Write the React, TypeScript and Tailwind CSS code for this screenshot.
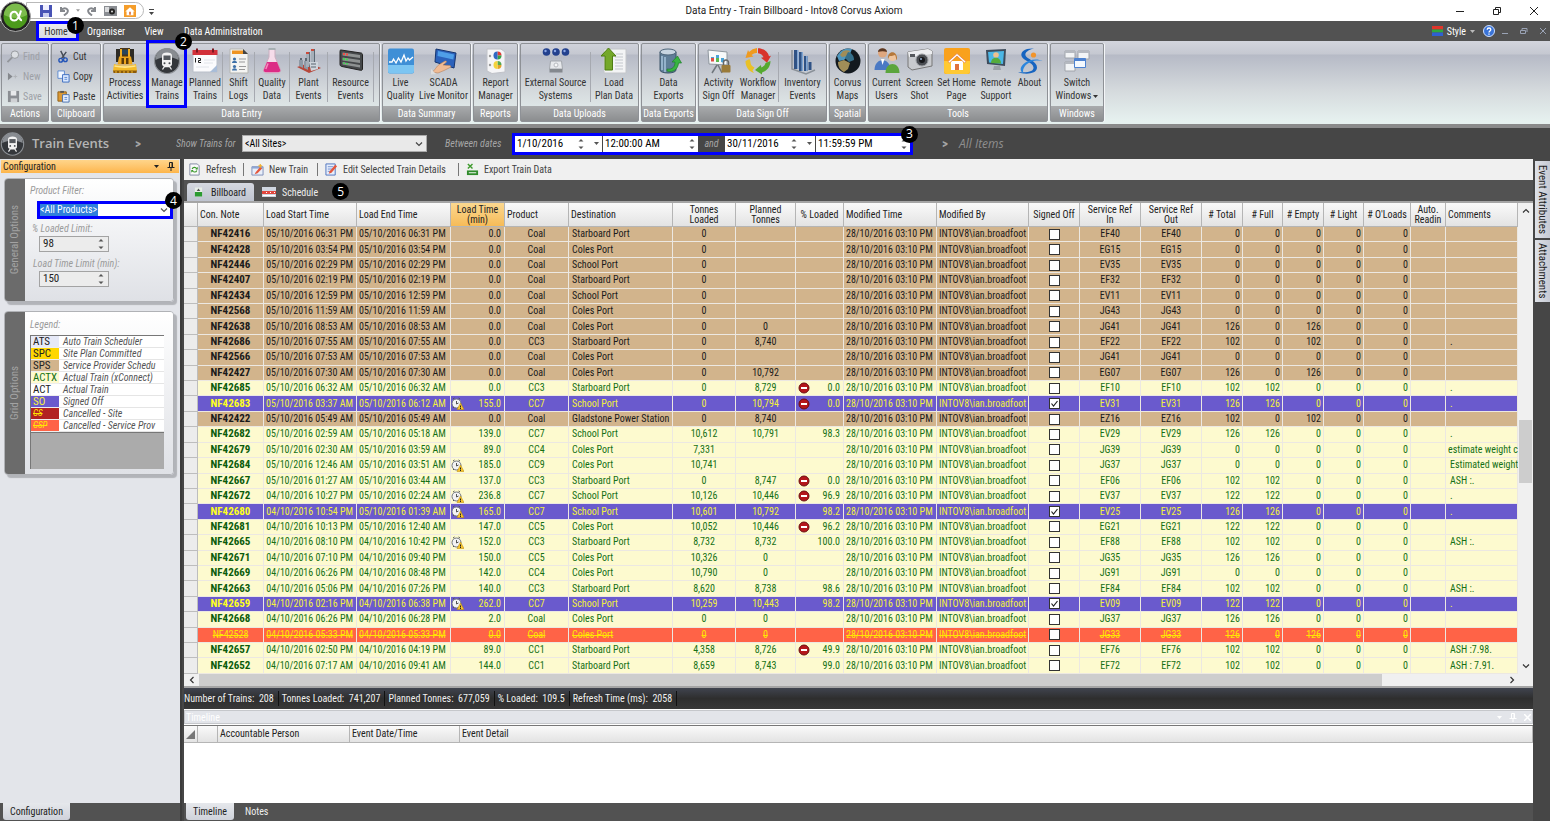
import React from 'react';

type Kind = 'sps' | 'actx' | 'so' | 'csp';

interface Train {
  kind: Kind;
  note: string;
  start: string;
  end: string;
  late?: boolean;
  mins: string;
  product: string;
  dest: string;
  loaded: string;
  planned: string;
  under?: boolean;
  pct: string;
  ref: string;
  total: number;
  full: number;
  empty: number;
  comment: string;
}

const row = (
  kind: Kind, note: string, start: string, end: string, mins: string, product: string, dest: string,
  loaded: string, planned: string, pct: string, ref: string, total: number, full: number, empty: number,
  comment = '', flags = '',
): Train => ({
  kind, note, start, end, mins, product, dest, loaded, planned, pct, ref, total, full, empty, comment,
  late: flags.includes('L'),
  under: flags.includes('U'),
});

const D5 = '05/10/2016 ';
const D4 = '04/10/2016 ';
const SB = 'Starboard Port';
const CO = 'Coles Port';
const SC = 'School Port';

const trains: Train[] = [
  row('sps', 'NF42416', D5 + '06:31 PM', D5 + '06:31 PM', '0.0', 'Coal', SB, '0', '', '', 'EF40', 0, 0, 0),
  row('sps', 'NF42428', D5 + '03:54 PM', D5 + '03:54 PM', '0.0', 'Coal', CO, '0', '', '', 'EG15', 0, 0, 0),
  row('sps', 'NF42446', D5 + '02:29 PM', D5 + '02:29 PM', '0.0', 'Coal', SC, '0', '', '', 'EV35', 0, 0, 0),
  row('sps', 'NF42407', D5 + '02:19 PM', D5 + '02:19 PM', '0.0', 'Coal', SB, '0', '', '', 'EF32', 0, 0, 0),
  row('sps', 'NF42434', D5 + '12:59 PM', D5 + '12:59 PM', '0.0', 'Coal', SC, '0', '', '', 'EV11', 0, 0, 0),
  row('sps', 'NF42568', D5 + '11:59 AM', D5 + '11:59 AM', '0.0', 'Coal', CO, '0', '', '', 'JG43', 0, 0, 0),
  row('sps', 'NF42638', D5 + '08:53 AM', D5 + '08:53 AM', '0.0', 'Coal', CO, '0', '0', '', 'JG41', 126, 0, 126),
  row('sps', 'NF42686', D5 + '07:55 AM', D5 + '07:55 AM', '0.0', 'CC3', SB, '0', '8,740', '', 'EF22', 102, 0, 102, '.'),
  row('sps', 'NF42566', D5 + '07:53 AM', D5 + '07:53 AM', '0.0', 'Coal', CO, '0', '', '', 'JG41', 0, 0, 0),
  row('sps', 'NF42427', D5 + '07:30 AM', D5 + '07:30 AM', '0.0', 'Coal', CO, '0', '10,792', '', 'EG07', 126, 0, 126),
  row('actx', 'NF42685', D5 + '06:32 AM', D5 + '06:32 AM', '0.0', 'CC3', SB, '0', '8,729', '0.0', 'EF10', 102, 102, 0, '.', 'U'),
  row('so', 'NF42683', D5 + '03:37 AM', D5 + '06:12 AM', '155.0', 'CC7', SC, '0', '10,794', '0.0', 'EV31', 126, 126, 0, '.', 'LU'),
  row('sps', 'NF42422', D5 + '05:49 AM', D5 + '05:49 AM', '0.0', 'Coal', 'Gladstone Power Station', '0', '8,740', '', 'EZ16', 102, 0, 102),
  row('actx', 'NF42682', D5 + '02:59 AM', D5 + '05:18 AM', '139.0', 'CC7', SC, '10,612', '10,791', '98.3', 'EV29', 126, 126, 0, '.'),
  row('actx', 'NF42679', D5 + '02:30 AM', D5 + '03:59 AM', '89.0', 'CC4', CO, '7,331', '', '', 'JG39', 0, 0, 0, 'estimate weight c'),
  row('actx', 'NF42684', D5 + '12:46 AM', D5 + '03:51 AM', '185.0', 'CC9', CO, '10,741', '', '', 'JG37', 0, 0, 0, 'Estimated weight', 'L'),
  row('actx', 'NF42667', D5 + '01:27 AM', D5 + '03:44 AM', '137.0', 'CC3', SB, '0', '8,747', '0.0', 'EF06', 102, 102, 0, 'ASH :.', 'U'),
  row('actx', 'NF42672', D4 + '10:27 PM', D5 + '02:24 AM', '236.8', 'CC7', SC, '10,126', '10,446', '96.9', 'EV37', 122, 122, 0, '.', 'LU'),
  row('so', 'NF42680', D4 + '10:54 PM', D5 + '01:39 AM', '165.0', 'CC7', SC, '10,601', '10,792', '98.2', 'EV25', 126, 126, 0, '.', 'L'),
  row('actx', 'NF42681', D4 + '10:13 PM', D5 + '12:40 AM', '147.0', 'CC5', CO, '10,052', '10,446', '96.2', 'EG21', 122, 122, 0, '', 'U'),
  row('actx', 'NF42665', D4 + '08:10 PM', D4 + '10:42 PM', '152.0', 'CC3', SB, '8,732', '8,732', '100.0', 'EF88', 102, 102, 0, 'ASH :.', 'L'),
  row('actx', 'NF42671', D4 + '07:10 PM', D4 + '09:40 PM', '150.0', 'CC5', CO, '10,326', '0', '', 'JG35', 126, 126, 0),
  row('actx', 'NF42669', D4 + '06:26 PM', D4 + '08:48 PM', '142.0', 'CC4', CO, '10,790', '0', '', 'JG91', 0, 0, 0),
  row('actx', 'NF42663', D4 + '05:06 PM', D4 + '07:26 PM', '140.0', 'CC3', SB, '8,620', '8,738', '98.6', 'EF84', 102, 102, 0, 'ASH :.'),
  row('so', 'NF42659', D4 + '02:16 PM', D4 + '06:38 PM', '262.0', 'CC7', SC, '10,259', '10,443', '98.2', 'EV09', 122, 122, 0, '.', 'L'),
  row('actx', 'NF42668', D4 + '06:26 PM', D4 + '06:28 PM', '2.0', 'Coal', CO, '0', '0', '', 'JG37', 126, 126, 0),
  row('csp', 'NF42528', D4 + '05:33 PM', D4 + '05:33 PM', '0.0', 'Coal', CO, '0', '0', '', 'JG33', 126, 0, 126),
  row('actx', 'NF42657', D4 + '02:50 PM', D4 + '04:19 PM', '89.0', 'CC1', SB, '4,358', '8,726', '49.9', 'EF76', 102, 102, 0, 'ASH :7.98.', 'U'),
  row('actx', 'NF42652', D4 + '07:17 AM', D4 + '09:41 AM', '144.0', 'CC1', SB, '8,659', '8,743', '99.0', 'EF72', 102, 102, 0, 'ASH : 7.91.'),
];

const rowStyle: Record<Kind, string> = {
  sps: 'bg-[#d2b48c] text-[#1a1a1a]',
  actx: 'bg-[#fdfacf] text-[#157015]',
  so: 'bg-[#6a5acd] text-[#f3f13c]',
  csp: 'bg-[#ff6347] text-[#ffe600] line-through',
};

const columns: [string, string][] = [
  ['', 'w-[14px]'],
  ['Con. Note', 'w-[66px] text-left'],
  ['Load Start Time', 'w-[93px] text-left'],
  ['Load End Time', 'w-[94px] text-left'],
  ['Load Time\n(min)', 'w-[54px] text-center'],
  ['Product', 'w-[64px] text-left'],
  ['Destination', 'w-[104px] text-left'],
  ['Tonnes\nLoaded', 'w-[63px] text-center'],
  ['Planned\nTonnes', 'w-[60px] text-center'],
  ['% Loaded', 'w-[48px] text-center'],
  ['Modified Time', 'w-[93px] text-left'],
  ['Modified By', 'w-[92px] text-left'],
  ['Signed Off', 'w-[51px] text-center'],
  ['Service Ref\nIn', 'w-[61px] text-center'],
  ['Service Ref\nOut', 'w-[61px] text-center'],
  ['# Total', 'w-[41px] text-center'],
  ['# Full', 'w-[40px] text-center'],
  ['# Empty', 'w-[41px] text-center'],
  ['# Light', 'w-[40px] text-center'],
  ["# O'Loads", 'w-[47px] text-center'],
  ['Auto.\nReadin', 'w-[35px] text-center'],
  ['Comments', 'text-left'],
];

const Badge: React.FC<{ n: number; className: string }> = ({ n, className }) => (
  <span className={`absolute z-20 flex h-[17px] w-[17px] items-center justify-center rounded-full bg-black font-['Open_Sans',sans-serif] text-[12px] leading-none text-white not-italic ${className}`}>
    {n}
  </span>
);

const Chevron: React.FC<{ up?: boolean; className?: string }> = ({ up, className = '' }) => (
  <svg viewBox="0 0 8 6" className={`h-[6px] w-[8px] ${className}`} fill="none" stroke="currentColor" strokeWidth="1.2">
    <path d={up ? 'M1 4.5 4 1.5 7 4.5' : 'M1 1.5 4 4.5 7 1.5'} />
  </svg>
);

const Triangle: React.FC<{ className?: string }> = ({ className = '' }) => (
  <svg viewBox="0 0 7 4" className={`shrink-0 ${className}`}><path d="M0 0h7L3.500 4z" fill="currentColor" /></svg>
);

const Spinner = () => (
  <svg viewBox="0 0 6 12" className="h-[12px] w-[6px] shrink-0" fill="#555">
    <path d="M0.500 3.500 3 1 5.500 3.500zM0.500 8.500 3 11 5.500 8.500z" />
  </svg>
);

const Pin = () => (
  <svg viewBox="0 0 8 9" className="h-[9px] w-[8px]" fill="none" stroke="currentColor" strokeWidth="1">
    <path d="M2.500 5V.5h3V5M5 1v4M.5 5.500h7M4 5.500V9" />
  </svg>
);

/* ---------- ribbon icons ---------- */

const Icon: React.FC<{ children: React.ReactNode }> = ({ children }) => (
  <svg viewBox="0 0 28 28" className="h-[28px] w-[28px] shrink-0">{children}</svg>
);

const Locomotive = () => (
  <>
    <circle cx="14" cy="14" r="12.500" fill="#34373b" stroke="#8d9196" strokeWidth="1.200" />
    <path d="M2.500 13a11.500 11.500 0 0 1 23 0c-7-4-16-4-23 0z" fill="#888c91" />
    <path d="M9 8.500c0-2 2-3 5-3s5 1 5 3V17c0 1.500-1 2.500-2.500 2.500h-5C10 19.500 9 18.500 9 17z" fill="#f2f2f2" />
    <path d="M10.500 8.500h7v4.500h-7z" fill="#55595e" />
    <path d="m9.500 22.500 2-3h5l2 3" fill="none" stroke="#f2f2f2" strokeWidth="1.300" />
    <circle cx="11.500" cy="16.200" r="1" fill="#44484c" /><circle cx="16.500" cy="16.200" r="1" fill="#44484c" />
  </>
);

const icons = {
  dozer: (
    <Icon>
      <path d="M5 2h4v13H5zM19 2h4v13h-4z" fill="#2e2b26" />
      <path d="M9 1h10v9H9z" fill="#4a3518" /><path d="M11 2.500h6v5h-6z" fill="#29455c" />
      <path d="M9 2h2v8H9zM17 2h2v8h-2z" fill="#f0ae22" />
      <path d="M8 9.500h12l1.500 8h-15z" fill="#eda51c" /><path d="M10.500 11h2.500v6h-2.500zM15 11h2.500v6H15z" fill="#5b3b0b" />
      <path d="M3 17c7 2 15 2 22 0l1 7H2z" fill="#f4bb2a" /><path d="M2 23.500h24l-.5 2.500h-23z" fill="#8c5a09" />
      <path d="M3.500 19c7 1.500 14 1.500 21 0" stroke="#ffe58b" strokeWidth="1.500" fill="none" /><path d="M5 24v2M9 24v2M13 24v2M17 24v2M21 24v2" stroke="#f4bb2a" />
    </Icon>
  ),
  train: <Icon><Locomotive /></Icon>,
  calendar: (
    <Icon>
      <path d="M2 5h24v20H2z" fill="#fbfbfd" stroke="#b9bfc9" />
      <path d="M1.500 3h25v5h-25z" fill="#d2303a" />
      <path d="M6 1.500v4M22 1.500v4" stroke="#7c1720" strokeWidth="2" />
      <path d="M4.500 11v4.500M7 11.500h2.500v2H7.500v2H10" stroke="#222" fill="none" />
      <path d="m19 25 7-7v7z" fill="#a9bdd8" /><path d="M13 13h11M13 16h9M5 20h13" stroke="#e1e4ea" />
    </Icon>
  ),
  shift: (
    <Icon>
      <path d="M5 2h13l5 5v19H5z" fill="#f4f4f2" stroke="#b5b5b0" /><path d="M7 3.500h12v3.500H7z" fill="#ee9422" />
      <path d="m18 2 5 5h-5z" fill="#444" />
      <circle cx="9.500" cy="12" r="1.600" fill="#3d70a8" /><path d="M7 16c0-3 5-3 5 0z" fill="#3d70a8" />
      <circle cx="9.500" cy="19.500" r="1.600" fill="#3d70a8" /><path d="M7 23.500c0-3 5-3 5 0z" fill="#3d70a8" />
      <path d="M14 12h7M14 15h6M14 19.500h7M14 22.500h6" stroke="#999" />
    </Icon>
  ),
  flask: (
    <Icon>
      <path d="M11 2h6v8l5.500 12.500c.8 2-.5 3.500-2.500 3.500H8c-2 0-3.300-1.500-2.500-3.500L11 10z" fill="#f5dcea" stroke="#c9aebf" />
      <path d="M9 15h10l3.200 7.800c.5 1.500-.4 2.400-2.200 2.400H8c-1.800 0-2.700-.9-2.200-2.400z" fill="#dc2c85" />
      <path d="M10 16.500 7.800 22" stroke="#f58bbd" strokeWidth="1.500" /><path d="M10.500 2h7" stroke="#9aa" strokeWidth="1.500" />
    </Icon>
  ),
  plant: (
    <Icon>
      <path d="m2 20 12 6 12-5-12-5z" fill="#b6483b" /><path d="M4 13h4v8l-4-2zM9 14h4v9l-4-2z" fill="#8e99a5" />
      <path d="M11 5h4v15h-4zM16 2h4v17h-4z" fill="#a5afb9" /><path d="M11 5h4v2h-4zM16 2h4v2h-4z" fill="#cc4b3b" />
      <path d="M14.500 5v15M19.500 2v17" stroke="#5d6873" /><path d="M14 15h9v7l-7 2z" fill="#cfd6dd" /><path d="M16 17h5M16 20h5" stroke="#5b6772" />
      <path d="M5 13v-2h2v2M10 14v-3h2v3" fill="#5d6873" />
    </Icon>
  ),
  resource: (
    <Icon>
      <path d="m4 3 20 3c1 0 1.500 1 1.500 2v14c0 1-.8 1.500-1.800 1.300L5 19.500c-1 0-2-1-2-2V4.500C3 3.500 3 3 4 3z" fill="#45484a" stroke="#222" />
      <path d="m5.500 5.500 17.500 2.500v3L5.500 8.500zM5.500 10.500 23 13v3L5.500 13.500zM5.500 15 23 18v2.500L5.500 17.500z" fill="#8e9292" />
      <path d="M7 6v2M10 6.500v2" stroke="#ef5045" strokeWidth="2" /><path d="M7 11v2M10 11.500v2M7 15.500v1.500M10 16v1.500" stroke="#49cf58" strokeWidth="2" />
    </Icon>
  ),
  live: (
    <Icon>
      <rect x="1" y="1.500" width="26" height="25" rx="2" fill="#3f8fd6" /><path d="M1 18h26v6q0 2.500-3 2.500H4q-3 0-3-2.500z" fill="#7cc5f2" />
      <path d="M2 15h3l1.500-3L9 16l2.500-5L14 15l3-7 2 6 2-3 1.500 2L26 10" fill="none" stroke="#fff" strokeWidth="1.300" />
    </Icon>
  ),
  scada: (
    <Icon>
      <path d="m6 2 20 4-2 15L5 15z" fill="#2c62bb" stroke="#15356f" /><path d="m8 4 16 3.500-.7 5L7.500 9z" fill="#4f9fe8" />
      <path d="M2 25c3-1 4-6 8-8l5-3c1.500-.5 2 .8 1 1.600l-3 2.400 7 .5c1 .5 1 1.500 0 2l-6 3-6 2.500z" fill="#f0bb94" stroke="#b9835d" strokeWidth=".6" />
      <path d="m1 22 5 5-5 .5z" fill="#ddd" />
    </Icon>
  ),
  report: (
    <Icon>
      <path d="M5 2h14l4 3v20l-13 1.500L5 24z" fill="#f5f5f7" stroke="#c0c2c8" />
      <circle cx="15.500" cy="8.500" r="4" fill="#e5e9ef" /><path d="M15.500 8.500V4.500a4 4 0 0 1 4 4z" fill="#e33b35" /><path d="M15.500 8.500h4a4 4 0 0 1-4 4z" fill="#37a046" /><path d="M15.500 12.500a4 4 0 0 1 0-8z" fill="#2f67c3" />
      <path d="M15.500 18v-4a4 4 0 0 1 4 4z" fill="#55a852" /><path d="M15.500 18h4a4 4 0 0 1-4 4z" fill="#e2a22b" /><path d="M15.500 22a4 4 0 0 1 0-8z" fill="#f4d33d" />
      <circle cx="8" cy="9" r="1.200" fill="#999" /><circle cx="8" cy="18" r="1.200" fill="#999" />
    </Icon>
  ),
  external: (
    <Icon>
      <circle cx="4.500" cy="5" r="3.800" fill="#23418e" /><circle cx="14" cy="5" r="3.800" fill="#23418e" /><circle cx="23.500" cy="5" r="3.800" fill="#23418e" />
      <circle cx="3.500" cy="4" r="1.200" fill="#8ba7e6" /><circle cx="13" cy="4" r="1.200" fill="#8ba7e6" /><circle cx="22.500" cy="4" r="1.200" fill="#8ba7e6" />
      <path d="M5 9v2h18V9M14 9v5" stroke="#b3b8c0" fill="none" strokeDasharray="1 1" />
      <path d="M8.500 14h11l1 8h-13z" fill="#e7e9ec" stroke="#a3a7ad" /><circle cx="14" cy="18" r="2" fill="#f7f8f9" stroke="#b7babf" /><path d="M7.500 22h13v3.500h-13z" fill="#84888e" />
    </Icon>
  ),
  load: (
    <Icon>
      <path d="M4 2h22v24H4z" fill="#f3f4f5" stroke="#c4c7ca" /><path d="M16 7h7M15 10h8M15 13h8M15 16h8M15 19h8M15 22h8" stroke="#c3c7cc" />
      <path d="m8.500 1 7.500 8h-3.500v14H5V9H1z" fill="#74a829" stroke="#4e7d13" />
    </Icon>
  ),
  exports: (
    <Icon>
      <path d="M5 5v18c0 4 16 4 16 0V5z" fill="#5f7e98" stroke="#3c5468" /><ellipse cx="13" cy="5" rx="8" ry="3" fill="#c7d5e1" stroke="#4d657a" />
      <path d="M7 9v14M10 10v15" stroke="#a7c4dc" strokeWidth="1.500" />
      <path d="M12 22c6 1 8-3 8-7h-3l5.500-6 4 7h-3c-.5 6-5 10-11.500 8z" fill="#37b441" stroke="#1c7f28" strokeWidth=".7" />
    </Icon>
  ),
  activity: (
    <Icon>
      <path d="m3 3 19 2v13L4 17z" fill="#f7f9fa" stroke="#8f979e" /><path d="M6 14v-4h3v4M11 15V8h3v7M16 15v-4h3v5" fill="#4aa3d8" />
      <path d="M6 11h3v3.500H6z" fill="#e04c43" /><path d="M11 11h3v4h-3z" fill="#5cb84e" /><path d="m12 18-5 8M13 18l4 8" stroke="#6f767c" strokeWidth="1.500" />
      <rect x="16.500" y="18" width="9" height="7.500" rx="1" fill="#9a7b3a" /><path d="M18.500 18v-2.500a2.500 2.500 0 0 1 5 0V18" fill="none" stroke="#666" strokeWidth="1.500" />
    </Icon>
  ),
  workflow: (
    <Icon>
      <path d="M13 1a13 13 0 0 0-8 4L4 3 1.500 11l8-1.500-2-1.500A8 8 0 0 1 13 6z" fill="#ef9a1f" />
      <path d="M14 1.200c6 0 10 4 11 8l2-.5-4 7-6-5 2.500-.5C18.500 8 17 6.500 14 6.300z" fill="#d8332c" />
      <path d="M26.500 14c0 6-4 10-8.500 11.500v2l-7-4.500 6-5 .3 2.500c2.500-1 3.700-2.500 4.200-4.500z" fill="#55a930" />
      <path d="M10 26C5 24.500 1.500 20 1.500 14l4-2 .8 2c0 3.500 1.700 5.500 4.200 6.500l-2 3z" fill="#e9c126" />
    </Icon>
  ),
  inventory: (
    <Icon>
      <path d="M3 3v19l14 5 9-4" fill="none" stroke="#8a9198" strokeWidth="1.500" />
      <path d="M5 3h4v19H5zM10 5h4v19h-4zM15 9h3.500v15H15zM19.500 15h3v8h-3z" fill="#2f5285" />
      <path d="M8 3h1.500v19H8zM12.500 5H14v19h-1.500zM17 9h1.500v15H17z" fill="#7fa5d3" />
    </Icon>
  ),
  globe: (
    <Icon>
      <circle cx="14" cy="14" r="12.500" fill="#13191f" /><path d="M3 9a12.500 12.500 0 0 1 15-7l-2 5-6 6-5 1z" fill="#4f96bd" />
      <path d="M9 4c3-1 5-1 7 0l-3 5-5 1-2-2zM4 15l6-2 6 3-2 6-4 3c-4-2-6-5-6-10z" fill="#a08d58" /><path d="M14 5c4 1 6 4 6 8l-5 2-4-4z" fill="#356f8a" />
    </Icon>
  ),
  users: (
    <Icon>
      <circle cx="9.500" cy="6" r="4.500" fill="#dfa77f" /><path d="M5 5c0-5 9-5 9 0-3-1-6-1-9 0z" fill="#5a3722" />
      <path d="M1.500 23c0-13 16-13 16 0z" fill="#4a79c4" /><path d="m8 12 1.500 6 2-6z" fill="#fff" />
      <circle cx="19.500" cy="10" r="4" fill="#efc49d" /><path d="M15 12c-1-9 10-9 9 1-1 0-1-4-2-5-2 1-5 1-5.500 1z" fill="#b5783b" />
      <path d="M12.500 26c0-12 14-12 14 0z" fill="#5ba53d" />
    </Icon>
  ),
  camera: (
    <Icon>
      <path d="M2 5 22 2l4 2v15L6 23l-4-3z" fill="#c8cace" stroke="#777" /><path d="M2 5 22 2l4 2v3L3 10z" fill="#ecedf0" />
      <circle cx="16" cy="13" r="6" fill="#4a4d52" stroke="#989ba0" /><circle cx="16" cy="13" r="3" fill="#17181b" /><circle cx="15" cy="12" r="1" fill="#9db6d8" />
      <path d="M4 7h5v3H4z" fill="#55585d" />
    </Icon>
  ),
  home: (
    <Icon>
      <rect x="1" y="1" width="26" height="26" rx="2" fill="#f9a11c" /><path d="M1 14h26v10q0 3-3 3H4q-3 0-3-3z" fill="#ffc933" />
      <path d="M8 14h12v9H8z" fill="#fff" /><path d="m5 14.500 9-8 9 8-1.500 1.500-7.500-7-7.500 7z" fill="#fff" stroke="#e2824a" strokeWidth=".8" />
      <path d="M12 17h4v6h-4z" fill="#e0723a" />
    </Icon>
  ),
  remote: (
    <Icon>
      <path d="M4 3 24 2l-1 17-18-2z" fill="#3e4c5c" /><path d="m6 5 16-1-1 13-14-1.500z" fill="#4cb7e6" />
      <circle cx="14" cy="8" r="2.800" fill="#efc08e" /><path d="M9 16c0-7 10-7 10 .5z" fill="#55ab3b" />
      <path d="M12 19h6l1 4h-8z" fill="#9ba1a8" /><path d="M8 23h14l-1 3H7z" fill="#c7cbd1" />
    </Icon>
  ),
  about: (
    <Icon>
      <path d="M18 1.500C9 1 4.500 4.500 5.500 9c1.200 4.500 11.500 6 12 11.500.3 4-5.500 5.500-15.500 4.500 6 2.800 19 2.500 19-4.500C21 14 10.500 12 9.500 8.500c-.8-3 2.500-5.500 8.500-7z" fill="#1664c0" />
      <path d="M26.500 14c-6-1.500-14 .5-17.500 5-2 2.500-2.500 5-1.500 7.500C3.500 24 4 20 7.500 17c5-4.500 13.500-6 19-3z" fill="#2b86dd" /><circle cx="17.500" cy="8" r="2.600" fill="#f2942a" />
    </Icon>
  ),
  windows: (
    <Icon>
      <path d="M2 4h10v7H2zM15 4h11v8H15zM2 15h10v9H2z" fill="#f2f4f6" stroke="#a0a4ab" /><path d="M2 4h10v2H2zM15 4h11v2H15zM2 15h10v2H2z" fill="#b5b9c0" />
      <path d="M11.500 11.500h11v9h-11z" fill="#f4f9ff" stroke="#4d82d0" /><path d="M11.500 11.500h11v2.500h-11z" fill="#4d82d0" />
    </Icon>
  ),
};

interface Tool {
  label: string;
  icon: React.ReactNode;
  width: string;
  divider?: boolean;
  marked?: boolean;
  menu?: boolean;
}

const groups: { title: string; width: string; tools: Tool[] }[] = [
  {
    title: 'Data Entry', width: 'w-[277px]', tools: [
      { label: 'Process\nActivities', icon: icons.dozer, width: 'w-[42px]' },
      { label: 'Manage\nTrains', icon: icons.train, width: 'w-[42px]', marked: true },
      { label: 'Planned\nTrains', icon: icons.calendar, width: 'w-[34px]', divider: true },
      { label: 'Shift\nLogs', icon: icons.shift, width: 'w-[31px]', divider: true },
      { label: 'Quality\nData', icon: icons.flask, width: 'w-[34px]', divider: true },
      { label: 'Plant\nEvents', icon: icons.plant, width: 'w-[37px]', divider: true },
      { label: 'Resource\nEvents', icon: icons.resource, width: 'w-[45px]', divider: true },
    ],
  },
  {
    title: 'Data Summary', width: 'w-[89px]', tools: [
      { label: 'Live\nQuality', icon: icons.live, width: 'w-[35px]' },
      { label: 'SCADA\nLive Monitor', icon: icons.scada, width: 'w-[51px]' },
    ],
  },
  { title: 'Reports', width: 'w-[45px]', tools: [{ label: 'Report\nManager', icon: icons.report, width: 'w-[43px]' }] },
  {
    title: 'Data Uploads', width: 'w-[119px]', tools: [
      { label: 'External Source\nSystems', icon: icons.external, width: 'w-[69px]', divider: true },
      { label: 'Load\nPlan Data', icon: icons.load, width: 'w-[46px]' },
    ],
  },
  { title: 'Data Exports', width: 'w-[55px]', tools: [{ label: 'Data\nExports', icon: icons.exports, width: 'w-[53px]' }] },
  {
    title: 'Data Sign Off', width: 'w-[129px]', tools: [
      { label: 'Activity\nSign Off', icon: icons.activity, width: 'w-[39px]' },
      { label: 'Workflow\nManager', icon: icons.workflow, width: 'w-[40px]', divider: true },
      { label: 'Inventory\nEvents', icon: icons.inventory, width: 'w-[47px]' },
    ],
  },
  { title: 'Spatial', width: 'w-[37px]', tools: [{ label: 'Corvus\nMaps', icon: icons.globe, width: 'w-[35px]' }] },
  {
    title: 'Tools', width: 'w-[180px]', tools: [
      { label: 'Current\nUsers', icon: icons.users, width: 'w-[35px]' },
      { label: 'Screen\nShot', icon: icons.camera, width: 'w-[31px]' },
      { label: 'Set Home\nPage', icon: icons.home, width: 'w-[43px]' },
      { label: 'Remote\nSupport', icon: icons.remote, width: 'w-[36px]' },
      { label: 'About', icon: icons.about, width: 'w-[31px]' },
    ],
  },
  { title: 'Windows', width: 'w-[54px]', tools: [{ label: 'Switch\nWindows', icon: icons.windows, width: 'w-[52px]', menu: true }] },
];

const RibbonGroup: React.FC<{ title: string; width: string; children: React.ReactNode }> = ({ title, width, children }) => (
  <div className={`flex h-[79px] shrink-0 flex-col rounded-[2px] border border-[#8e9196] shadow-[1px_0_0_#f4f6f8] ${width}`}>
    <div className="flex flex-1">{children}</div>
    <div className="h-[15px] bg-linear-to-b from-[#a9abad] to-[#8b8d8f] text-center leading-[15px] whitespace-nowrap text-white">{title}</div>
  </div>
);

const SmallTool: React.FC<{ label: string; icon: React.ReactNode; disabled?: boolean }> = ({ label, icon, disabled }) => (
  <button disabled={disabled} className={`flex h-[20px] items-center gap-[3px] ${disabled ? 'text-[#9da0a6]' : 'text-[#333]'}`}>
    <svg viewBox="0 0 14 14" className="h-[13px] w-[13px]">{icon}</svg>
    {label}
  </button>
);

const Ribbon = () => (
  <div className="flex h-[83px] shrink-0 gap-[2px] bg-[linear-gradient(#d3d5dd_0,#c5c8d1_13px,#b6bac6_14px,#d5dadd_50px,#e6f1ef_80px)] px-[1px] pt-[2px] text-[10px]">
    <RibbonGroup title="Actions" width="w-[48px]">
      <div className="flex flex-1 flex-col pt-[2px] pl-[5px]">
        <SmallTool disabled label="Find" icon={<><circle cx="8.500" cy="5" r="4" fill="#dcdfe3" stroke="#93969b" /><path d="m5.500 8-5 5" stroke="#93969b" strokeWidth="2" /></>} />
        <SmallTool disabled label="New" icon={<><path d="m1 3 5 4-5 4z" fill="#85888d" /><path d="M9 5v4M7 7h4" stroke="#b0b3b8" /></>} />
        <SmallTool disabled label="Save" icon={<><path d="M1 1h12v12H1z" fill="#8b8e93" /><path d="M4 1h6v5H4z" fill="#e8e9eb" /><path d="M4 9h7v4H4z" fill="#cfd1d4" /></>} />
      </div>
    </RibbonGroup>
    <RibbonGroup title="Clipboard" width="w-[50px]">
      <div className="flex flex-1 flex-col pt-[2px] pl-[5px]">
        <SmallTool label="Cut" icon={<><path d="m4 1 4 8M10 2 5 9" stroke="#444a55" strokeWidth="1.500" /><circle cx="4" cy="11" r="2" fill="none" stroke="#2455b8" strokeWidth="1.500" /><circle cx="9" cy="10.500" r="2" fill="none" stroke="#2455b8" strokeWidth="1.500" /></>} />
        <SmallTool label="Copy" icon={<><path d="M1 1h7v8H1z" fill="#f2f7ff" stroke="#5a87cf" /><path d="M6 5h7v8H6z" fill="#dbe9ff" stroke="#3a6bc0" /><path d="M8 8h3M8 10h3" stroke="#5a87cf" /></>} />
        <SmallTool label="Paste" icon={<><path d="M1 2h9v10H1z" fill="#dc9a36" stroke="#8f5e14" /><path d="M3.500 1h4v2h-4z" fill="#555" /><path d="M6 5h7v8H6z" fill="#e9f1ff" stroke="#466fb0" /><path d="M8 8h3M8 10h3" stroke="#5a87cf" /></>} />
      </div>
    </RibbonGroup>
    {groups.map((g) => (
      <RibbonGroup key={g.title} title={g.title} width={g.width}>
        {g.tools.map((t) => (
          <React.Fragment key={t.label}>
            <button className={`relative flex shrink-0 flex-col items-center pt-[3px] leading-[13px] text-[#333] ${t.width}`}>
              {t.icon}
              <span className="pt-[1px] text-center whitespace-pre">
                {t.label}
                {t.menu && <Triangle className="ml-[2px] inline h-[3px] w-[5px]" />}
              </span>
              {t.marked && <span className="absolute -top-[4px] left-0 z-10 h-[68px] w-[41px] border-[3px] border-[#0000fe]" />}
              {t.marked && <Badge n={2} className="-top-[11px] left-[29px]" />}
            </button>
            {t.divider && <span className="mt-[8px] h-[50px] w-px shrink-0 bg-[#a6a9b0]" />}
          </React.Fragment>
        ))}
      </RibbonGroup>
    ))}
  </div>
);

const TitleBar = () => (
  <div className="relative flex h-[21px] shrink-0 items-center justify-end bg-white">
    <div className="absolute top-[2px] left-[26px] flex h-[17px] w-[118px] items-center gap-[7px] rounded-r-full border border-[#b9b9b9] pl-[13px]">
      <svg viewBox="0 0 12 12" className="h-[12px] w-[12px]"><path d="M0 0h12v12H0z" fill="#4853b5" /><path d="M3 0h6v5H3z" fill="#eef" /><path d="M3 8h6v4H3z" fill="#c9cdf0" /></svg>
      <svg viewBox="0 0 10 10" className="h-[10px] w-[10px]" fill="none" stroke="#85888d" strokeWidth="2"><path d="M2 1v4h4M2 5c3-5 9-2 6 2L5 9.500" /></svg>
      <Triangle className="h-[3px] w-[4px] text-[#999]" />
      <svg viewBox="0 0 10 10" className="h-[10px] w-[10px]" fill="none" stroke="#85888d" strokeWidth="2"><path d="M8 1v4H4M8 5C5 0-1 3 2 7l3 2.500" /></svg>
      <svg viewBox="0 0 13 12" className="h-[12px] w-[13px]"><path d="M0 1h13v10H0z" fill="#8a8d92" /><path d="M1 2h4v5H1z" fill="#dadbdd" /><circle cx="8" cy="6.500" r="3" fill="#222" /><circle cx="8" cy="6.500" r="1" fill="#ddd" /></svg>
      <svg viewBox="0 0 28 28" className="h-[12px] w-[12px]"><rect width="28" height="28" fill="#f59d2a" /><path d="m3 15 11-10 11 10h-3v9H6v-9z" fill="#fff" /><path d="M12 16h4v7h-4z" fill="#e0723a" /></svg>
    </div>
    <svg viewBox="0 0 5 6" className="absolute top-[9px] left-[149px] h-[6px] w-[5px] text-[#444]"><path d="M0 0h5v1H0zM0 3h5L2.500 6z" fill="currentColor" /></svg>
    <h1 className="absolute inset-x-[200px] pl-[38px] text-center font-['Roboto',sans-serif] text-[10px] text-[#222]">Data Entry - Train Billboard - Intov8 Corvus Axiom</h1>
    <div className="z-10 flex gap-[27px] pr-[11px] text-[#222]">
      <button aria-label="Minimise"><svg viewBox="0 0 10 10" className="h-[10px] w-[10px]" stroke="currentColor"><path d="M1 5.500h8" /></svg></button>
      <button aria-label="Restore"><svg viewBox="0 0 10 10" className="h-[10px] w-[10px]" fill="none" stroke="currentColor"><path d="M1.500 3.500h5v5h-5zM3.500 3V1.500h5v5H7" /></svg></button>
      <button aria-label="Close"><svg viewBox="0 0 10 10" className="h-[10px] w-[10px]" stroke="currentColor"><path d="m1 1 8 8M9 1 1 9" /></svg></button>
    </div>
    <button aria-label="Application menu" className="absolute top-0 left-0 z-20">
      <svg viewBox="0 0 32 33" className="h-[33px] w-[32px]">
        <circle cx="15.500" cy="16.500" r="15" fill="#222" stroke="#aaa" /><circle cx="15.500" cy="16.500" r="12" fill="#4c9a1c" /><path d="M4 15a11.500 11.500 0 0 1 23 0c-7 4-15 4-23 0z" fill="#7cbc4c" />
        <path d="M21 10.500c-1.500 6-3 10-6.500 10-2.500 0-4-1.800-4-4.300s1.500-4.500 4-4.500c4 0 4 9 7.500 8.500" fill="none" stroke="#fff" strokeWidth="2" />
      </svg>
    </button>
  </div>
);

const TabBar = () => (
  <div className="flex h-[20px] shrink-0 items-center bg-[#525252] pl-[36px] text-[10px] text-white">
    <button className="relative h-[20px] w-[43px] bg-linear-to-b from-[#efefef] to-[#d5d7de] pr-[3px] text-[#333]">
      Home
      <span className="absolute inset-0 border-[3px] border-[#0000fe]" />
      <Badge n={1} className="-top-[4px] left-[31px]" />
    </button>
    <button className="ml-[8px] w-[38px]">Organiser</button>
    <button className="ml-[19px] w-[20px]">View</button>
    <button className="ml-[20px] whitespace-nowrap">Data Administration</button>
    <div className="ml-auto flex items-center gap-[4px] pr-[3px]">
      <svg viewBox="0 0 11 10" className="h-[10px] w-[11px]"><path d="M0 0h11v3.500H0z" fill="#e0352b" /><path d="M0 3.500h11v3H0z" fill="#2fa83e" /><path d="M0 6.500h11V10H0z" fill="#2f5fd2" /></svg>
      <button className="flex items-center gap-[4px]">Style <Triangle className="h-[3px] w-[5px] text-[#bbb]" /></button>
      <svg viewBox="0 0 12 12" className="mr-[2px] ml-[4px] h-[12px] w-[12px]"><circle cx="6" cy="6" r="5.500" fill="#3973d8" stroke="#cfe0ff" /><path d="M4.200 4.800c0-2.500 3.600-2.300 3.600-.2C7.800 6 6 6 6 7.500M6 8.500v1.200" stroke="#fff" strokeWidth="1.300" fill="none" /></svg>
      <svg viewBox="0 0 46 8" className="h-[8px] w-[46px]" fill="none" stroke="#9aa3b5"><path d="M1 6.500h6M19.500 3.500h5v3h-5zM21 3V1.500h5V5M39 1l6 6M45 1l-6 6" /></svg>
    </div>
  </div>
);

const DateField: React.FC<{ label: string; value: string; width: string; drop?: boolean }> = ({ label, value, width, drop }) => (
  <div className={`flex h-full items-center gap-[10px] bg-white pr-[3px] ${width}`}>
    <input aria-label={label} defaultValue={value} className="h-full min-w-0 flex-1 bg-white pl-[2px] text-[11px] text-black outline-none" />
    <Spinner />
    {drop && <Triangle className="h-[3px] w-[5px] text-[#555]" />}
  </div>
);

const FilterBar = () => (
  <div className="flex h-[35px] shrink-0 items-center border-t-[4px] border-[#8a8a8a] bg-[#464646] text-[10px] text-[#a5a5a5] italic">
    <svg viewBox="0 0 28 28" className="h-[26px] w-[25px]"><Locomotive /></svg>
    <h2 className="ml-[7px] w-[96px] font-['Open_Sans',sans-serif] text-[13px] font-semibold text-[#b5b5b5] not-italic">Train Events</h2>
    <span className="ml-[7px] w-[41px] text-[13px] font-bold not-italic">&gt;</span>
    <label htmlFor="sites" className="w-[66px] whitespace-nowrap">Show Trains for</label>
    <div className="relative h-[17px] w-[185px]">
      <select id="sites" className="h-full w-full appearance-none border border-[#aaa] bg-[#e9e9e9] pl-[2px] text-black not-italic">
        <option>&lt;All Sites&gt;</option>
      </select>
      <Chevron className="absolute top-[6px] right-[4px] text-[#444]" />
    </div>
    <span className="ml-[18px] w-[67px] whitespace-nowrap">Between dates</span>
    <div className="relative flex h-[22px] w-[401px] items-center border-[3px] border-[#0000fe] not-italic">
      <DateField label="From date" value="1/10/2016" width="w-[87px]" drop />
      <span className="w-px" />
      <DateField label="From time" value="12:00:00 AM" width="w-[95px]" />
      <span className="w-[27px] text-center italic">and</span>
      <DateField label="To date" value="30/11/2016" width="w-[90px]" drop />
      <span className="w-px" />
      <DateField label="To time" value="11:59:59 PM" width="w-[94px]" />
      <Badge n={3} className="-top-[10px] -right-[8px]" />
    </div>
    <span className="ml-[29px] w-[17px] text-[13px] font-bold not-italic">&gt;</span>
    <span className="font-['Open_Sans',sans-serif] text-[12px] text-[#8f8f8f]">All Items</span>
  </div>
);

const legend: [string, string, string][] = [
  ['ATS', 'Auto Train Scheduler', 'bg-[#e6e9f7] text-[11px] text-[#222]'],
  ['SPC', 'Site Plan Committed', 'bg-[#ffd700] text-[11px] text-[#222]'],
  ['SPS', 'Service Provider Schedu', 'bg-[#d2b48c] text-[11px] text-[#222]'],
  ['ACTX', 'Actual Train (xConnect)', 'bg-[#fdfacf] text-[11px] text-[#157015]'],
  ['ACT', 'Actual Train', 'bg-white text-[11px] text-[#222]'],
  ['SO', 'Signed Off', 'bg-[#6a5acd] text-[11px] text-[#f3f13c]'],
  ['CS', 'Cancelled - Site', 'bg-[#b22222] text-[#ffe600] italic line-through text-[9px]'],
  ['CSP', 'Cancelled - Service Prov', 'bg-[#ff6347] text-[#ffe600] italic line-through text-[9px]'],
];

const Card: React.FC<{ title: string; height: string; children: React.ReactNode }> = ({ title, height, children }) => (
  <section className={`mr-[6px] ml-[4px] flex shrink-0 rounded-[4px] border border-[#b0b2b6] shadow-[3px_3px_1px_#b2b4b9] ${height}`}>
    <div className="flex w-[20px] shrink-0 items-center justify-center rounded-l-[3px] bg-[#6b6b6b] text-[#a3a3a3]">
      <span className="rotate-180 text-[11px] [writing-mode:vertical-rl]">{title}</span>
    </div>
    <div className="min-w-0 flex-1 rounded-r-[3px] bg-linear-to-b from-white to-[#dfe1e6] text-[#9b9b9b]">{children}</div>
  </section>
);

const NumberBox: React.FC<{ id: string; value: string }> = ({ id, value }) => (
  <div className="ml-[14px] flex h-[16px] w-[70px] items-center border border-[#a3a3a3] bg-[#ececec] pr-[4px]">
    <input id={id} defaultValue={value} className="min-w-0 flex-1 bg-transparent pl-[3px] text-[11px] leading-[14px] text-[#222] outline-none" />
    <Spinner />
  </div>
);

const SidePanel = () => (
  <aside className="flex w-[182px] shrink-0 flex-col border-r-[2px] border-[#3c3c3c] bg-[#e3e5ea] text-[10px]">
    <div className="mx-[1px] mt-[1px] flex h-[13px] items-center gap-[8px] bg-linear-to-b from-[#ffd58a] to-[#fdb54a] px-[2px] pr-[4px] text-[#222]">
      <h3 className="flex-1">Configuration</h3>
      <Triangle className="h-[3px] w-[5px]" />
      <Pin />
    </div>
    <div className="h-[5px]" />
    <Card title="General Options" height="h-[124px]">
      <div className="pt-[5px] pl-[5px] leading-[14px] italic"><label htmlFor="product">Product Filter:</label></div>
      <div className="relative mt-[3px] ml-[12px] h-[18px] w-[136px] border-[3px] border-[#0000fe] bg-white">
        <input id="product" defaultValue="<All Products>" className="block h-[12px] w-[58px] bg-[#2f7fdc] text-[10px] leading-[12px] text-white outline-none" />
        <Chevron className="absolute top-[3px] right-[2px] text-[#555]" />
        <Badge n={4} className="-top-[12px] -right-[12px]" />
      </div>
      <div className="pt-[3px] pl-[7px] leading-[14px] italic"><label htmlFor="pct">% Loaded Limit:</label></div>
      <NumberBox id="pct" value="98" />
      <div className="pt-[5px] pl-[8px] leading-[14px] italic"><label htmlFor="mins">Load Time Limit (min):</label></div>
      <NumberBox id="mins" value="150" />
    </Card>
    <div className="h-[9px]" />
    <Card title="Grid Options" height="h-[164px]">
      <h4 className="pt-[6px] pl-[5px] leading-[14px] italic">Legend:</h4>
      <div className="mt-[3px] ml-[5px] h-[134px] w-[134px] overflow-hidden border-t border-l border-[#777] bg-[#ababab]">
        <table className="w-full table-fixed border-separate border-spacing-0 border-b border-[#777]">
          <tbody>
            {legend.map(([code, text, style]) => (
              <tr key={code} className="leading-[11px]">
                <td className={`w-[28px] border-b border-[#eee] p-0 pl-[2px] whitespace-nowrap ${style}`}>{code}</td>
                <td className="border-b border-[#e5e5e5] bg-white p-0 pl-[4px] whitespace-nowrap text-[#555] italic">{text}</td>
              </tr>
            ))}
          </tbody>
        </table>
      </div>
    </Card>
    <div className="mt-auto flex h-[18px] bg-[#525252] px-[3px] pb-[1px]">
      <button className="w-[67px] rounded-b-[3px] bg-linear-to-b from-[#e6e8ec] to-[#cfd2da] text-[#222]">Configuration</button>
    </div>
  </aside>
);

const toolbar: { label: string; icon: React.ReactNode; width: string }[] = [
  { label: 'Refresh', width: 'w-[55px]', icon: <><path d="M2 1h8l2 2v10H2z" fill="#fafafa" stroke="#7d86a0" /><path d="M4.500 6.500c1-2.500 4-2 5 0M9.500 8c-1 2.500-4 2-5 0" stroke="#3c9a2e" strokeWidth="1.300" fill="none" /><path d="M10.500 4v3H8zM3.500 10.500v-3H6z" fill="#3c9a2e" /></> },
  { label: 'New Train', width: 'w-[66px]', icon: <><path d="M1 4h12v9H1z" fill="#e8eef9" stroke="#7a8db8" /><path d="M1 4h12v2H1z" fill="#8ea6d6" /><path d="m5 10 5-6 2 2-5 5-3 1z" fill="#e4573d" /><path d="M10 1v4M8 3h4" stroke="#f2b02c" strokeWidth="1.300" /></> },
  { label: 'Edit Selected Train Details', width: 'w-[133px]', icon: <><path d="M1 1h10v12H1z" fill="#e7eefb" stroke="#4c70bd" /><path d="M3 4h6M3 6.500h6M3 9h4" stroke="#6f8fd0" /><path d="m5 9 6-7 2 1.500-6 7-3 1z" fill="#e4573d" /></> },
  { label: 'Export Train Data', width: 'w-[100px]', icon: <><path d="m2 1 5 5M7 1 2 6" stroke="#3e9b2d" strokeWidth="1.500" /><path d="M8 2h5v6H8z" fill="#f0f4f0" /><path d="M1 8h12v5H1z" fill="#2f8b2b" /><path d="M3 10.500h8" stroke="#fff" /></> },
];

const Clock = () => (
  <svg viewBox="0 0 13 13" className="h-[13px] w-[13px]" role="img" aria-label="Over time limit">
    <circle cx="5.500" cy="6.500" r="4.500" fill="#f2f2f4" stroke="#6f7480" /><path d="M2 2 3.500 1M9 2 7.500 1M5.500 4v3l2-1M2 11l1-1" stroke="#555" fill="none" />
    <path d="m9.500 6 3.500 6.500H6z" fill="#f8c52b" stroke="#b88608" strokeWidth=".5" /><path d="M9.500 8.500v2M9.500 11v1" stroke="#222" />
  </svg>
);

const NoEntry = () => (
  <svg viewBox="0 0 12 12" className="h-[12px] w-[12px]" role="img" aria-label="Under loaded">
    <circle cx="6" cy="6" r="5" fill="#b4161b" stroke="#6b0d10" /><path d="M3 5h6v2H3z" fill="#fff" />
  </svg>
);

const TrainGrid = () => {
  const cell = 'border-r border-b border-[#ece8e2] p-0 whitespace-nowrap';
  return (
    <table className="h-full w-full table-fixed border-separate border-spacing-0 bg-white leading-[14px]">
      <thead>
        <tr className="h-[24px] leading-[10px] text-[#222]">
          {columns.map(([title, style], i) => (
            <th
              key={i}
              className={`border-r border-b border-[#b5b5b5] p-0 px-[2px] font-normal whitespace-pre ${style} ${i === 4 ? 'bg-linear-to-b from-[#fbd88f] to-[#f6bb57]' : 'bg-linear-to-b from-[#fafafa] to-[#e3e3e3]'}`}
            >
              {title}
            </th>
          ))}
        </tr>
      </thead>
      <tbody>
        {trains.map((t) => (
          <tr key={t.note} className={rowStyle[t.kind]}>
            <td className="border-r border-b border-[#bdbdbd] bg-[#ececec] p-0" />
            <td className={`${cell} text-center ${t.kind === 'csp' ? '' : 'text-[11px] font-bold'} ${t.kind === 'actx' ? 'text-[#0b5c0b]' : ''} ${t.kind === 'so' ? 'text-[#ffff20]' : ''}`}>{t.note}</td>
            <td className={`${cell} pr-[3px] text-right`}>{t.start}</td>
            <td className={`${cell} pl-[2px]`}>{t.end}</td>
            <td className={`${cell} pr-[3px]`}>
              <span className="flex h-[14px] items-center justify-end">{t.late && <span className="mr-auto"><Clock /></span>}{t.mins}</span>
            </td>
            <td className={`${cell} text-center`}>{t.product}</td>
            <td className={`${cell} pl-[3px]`}>{t.dest}</td>
            <td className={`${cell} text-center`}>{t.loaded}</td>
            <td className={`${cell} text-center`}>{t.planned}</td>
            <td className={`${cell} pr-[3px] pl-[2px]`}>
              <span className="flex h-[14px] items-center justify-end">{t.under && <span className="mr-auto"><NoEntry /></span>}{t.pct}</span>
            </td>
            <td className={`${cell} pl-[2px]`}>28/10/2016 03:10 PM</td>
            <td className={`${cell} pl-[2px]`}>INTOV8\ian.broadfoot</td>
            <td className={cell}>
              <span className="relative mx-auto block h-[11px] w-[11px]">
                <input type="checkbox" aria-label={`${t.note} signed off`} defaultChecked={t.kind === 'so'} className="block h-[11px] w-[11px] appearance-none border border-[#333] bg-white" />
                {t.kind === 'so' && <svg viewBox="0 0 11 11" className="absolute inset-0" fill="none" stroke="#222" strokeWidth="1.200"><path d="m2.500 5.500 2 2.500 4-5" /></svg>}
              </span>
            </td>
            <td className={`${cell} text-center`}>{t.ref}</td>
            <td className={`${cell} text-center`}>{t.ref}</td>
            {[t.total, t.full, t.empty, 0, 0].map((n, i) => (
              <td key={i} className={`${cell} pr-[2px] text-right`}>{n}</td>
            ))}
            <td className={cell} />
            <td className={`${cell} ${t.comment.startsWith('est') ? 'pl-[2px]' : 'pl-[4px]'}`}>{t.comment}</td>
          </tr>
        ))}
      </tbody>
    </table>
  );
};

const stats = ['Number of Trains:  208', 'Tonnes Loaded:  741,207', 'Planned Tonnes:  677,059', '% Loaded:  109.5', 'Refresh Time (ms):  2058'];

const MainPanel = () => (
  <main className="ml-[2px] flex min-w-0 flex-1 flex-col text-[10px]">
    <div className="flex h-[21px] shrink-0 items-center bg-[#f0f0f0] pl-[4px] text-[#444]">
      {toolbar.map((t, i) => (
        <React.Fragment key={t.label}>
          {i > 0 && <span className="mr-[7px] h-[13px] w-px bg-[#777]" />}
          <button className={`flex items-center gap-[5px] whitespace-nowrap ${t.width}`}>
            <svg viewBox="0 0 14 14" className="h-[13px] w-[13px] shrink-0">{t.icon}</svg>
            {t.label}
          </button>
        </React.Fragment>
      ))}
    </div>
    <div className="flex h-[21px] shrink-0 items-end bg-[#525252] pl-[3px]">
      <button className="flex h-[18px] w-[67px] items-center gap-[8px] rounded-t-[3px] bg-linear-to-b from-[#d5d8e0] to-[#bfc4d0] pl-[7px] text-[#222]">
        <svg viewBox="0 0 10 10" className="h-[10px] w-[9px]"><path d="M1 0h8v10H1z" fill="#e8eee8" /><path d="M1 5h8v5H1z" fill="#2b9b31" /><path d="m3 4 2-3 2 3z" fill="#555" /></svg>
        Billboard
      </button>
      <button className="ml-[8px] flex h-[18px] items-center gap-[6px] text-[#eee]">
        <svg viewBox="0 0 14 10" className="h-[10px] w-[14px]"><path d="M0 0h14v10H0z" fill="#cfd6e0" /><path d="M0 4h14v3H0z" fill="#e0473e" /><path d="M4 5.500h1M8 5.500h1M12 5.500h1M1 8.500h12" stroke="#fff" /></svg>
        Schedule
      </button>
      <span className="relative h-[18px]"><Badge n={5} className="top-0 left-[14px]" /></span>
    </div>
    <div className="flex min-h-0 flex-1 flex-col border-t-[2px] border-b-[2px] border-[#a5a5a5] bg-[#f0f0f0]">
      <div className="flex min-h-0 flex-1">
        <div className="min-w-0 flex-1"><TrainGrid /></div>
        <div className="flex w-[15px] flex-col items-center bg-[#f0f0f0] py-[5px] text-[#333]">
          <Chevron up />
          <span className="mt-[206px] h-[63px] w-[13px] bg-[#cdcdcd]" />
          <Chevron className="mt-auto" />
        </div>
      </div>
      <div className="flex h-[12px] shrink-0 items-center pr-[17px] pl-[4px] text-[#333]">
        <Chevron className="rotate-90" />
        <span className="ml-[3px] h-full w-[1183px] bg-[#cdcdcd]" />
        <Chevron className="ml-auto -rotate-90" />
      </div>
    </div>
    <div className="flex h-[21px] shrink-0 items-center bg-linear-to-b from-[#40444f] via-[#2e2e2e] to-[#383838] text-[#f0f0f0]">
      {stats.map((s) => (
        <span key={s} className="mr-[3px] border-r border-[#111] pr-[4px] whitespace-pre">{s}</span>
      ))}
    </div>
    <section className="flex h-[94px] shrink-0 flex-col bg-white">
      <div className="mt-[1px] flex h-[14px] items-center gap-[7px] border border-[#c5c7cb] bg-[#e3e5ea] px-[1px] text-white">
        <h3 className="flex-1">Timeline</h3>
        <Triangle className="h-[3px] w-[5px]" />
        <Pin />
        <svg viewBox="0 0 7 7" className="h-[7px] w-[7px]" stroke="currentColor" strokeWidth="1.500"><path d="m0 0 7 7M7 0 0 7" /></svg>
      </div>
      <table className="mt-[1px] w-full table-fixed border-separate border-spacing-0 border-t border-[#777] text-[#222]">
        <thead>
          <tr className="h-[17px] text-left leading-[14px] *:border-r *:border-b *:border-[#b5b5b5] *:bg-linear-to-b *:from-[#fafafa] *:to-[#e3e3e3] *:p-0 *:pl-[2px] *:font-normal">
            <th className="w-[14px]"><svg viewBox="0 0 9 9" className="h-[9px] w-[9px]"><path d="M9 0v9H0z" fill="#777" /></svg></th>
            <th className="w-[20px]" />
            <th className="w-[132px]">Accountable Person</th>
            <th className="w-[110px]">Event Date/Time</th>
            <th>Event Detail</th>
          </tr>
        </thead>
      </table>
    </section>
    <div className="flex h-[18px] shrink-0 bg-[#525252] pb-[1px] pl-[2px]">
      <button className="w-[48px] rounded-b-[3px] bg-linear-to-b from-[#e6e8ec] to-[#cfd2da] text-[#222]">Timeline</button>
      <button className="ml-[11px] text-[#eee]">Notes</button>
    </div>
  </main>
);

const App: React.FC = () => (
  <div className="flex h-screen flex-col overflow-hidden bg-[#464646] font-['Roboto_Condensed','Liberation_Sans',sans-serif]">
    <TitleBar />
    <TabBar />
    <Ribbon />
    <FilterBar />
    <div className="flex min-h-0 flex-1">
      <SidePanel />
      <MainPanel />
      <nav className="ml-[2px] flex w-[15px] shrink-0 flex-col gap-[2px] pt-[2px] text-[11px] text-[#222]">
        <button className="h-[77px] bg-linear-to-r from-[#dfe2e8] to-[#c6cad4] leading-[15px] whitespace-nowrap [writing-mode:vertical-rl]">Event Attributes</button>
        <button className="h-[62px] bg-linear-to-r from-[#dfe2e8] to-[#c6cad4] leading-[15px] whitespace-nowrap [writing-mode:vertical-rl]">Attachments</button>
      </nav>
    </div>
  </div>
);

export default App;
